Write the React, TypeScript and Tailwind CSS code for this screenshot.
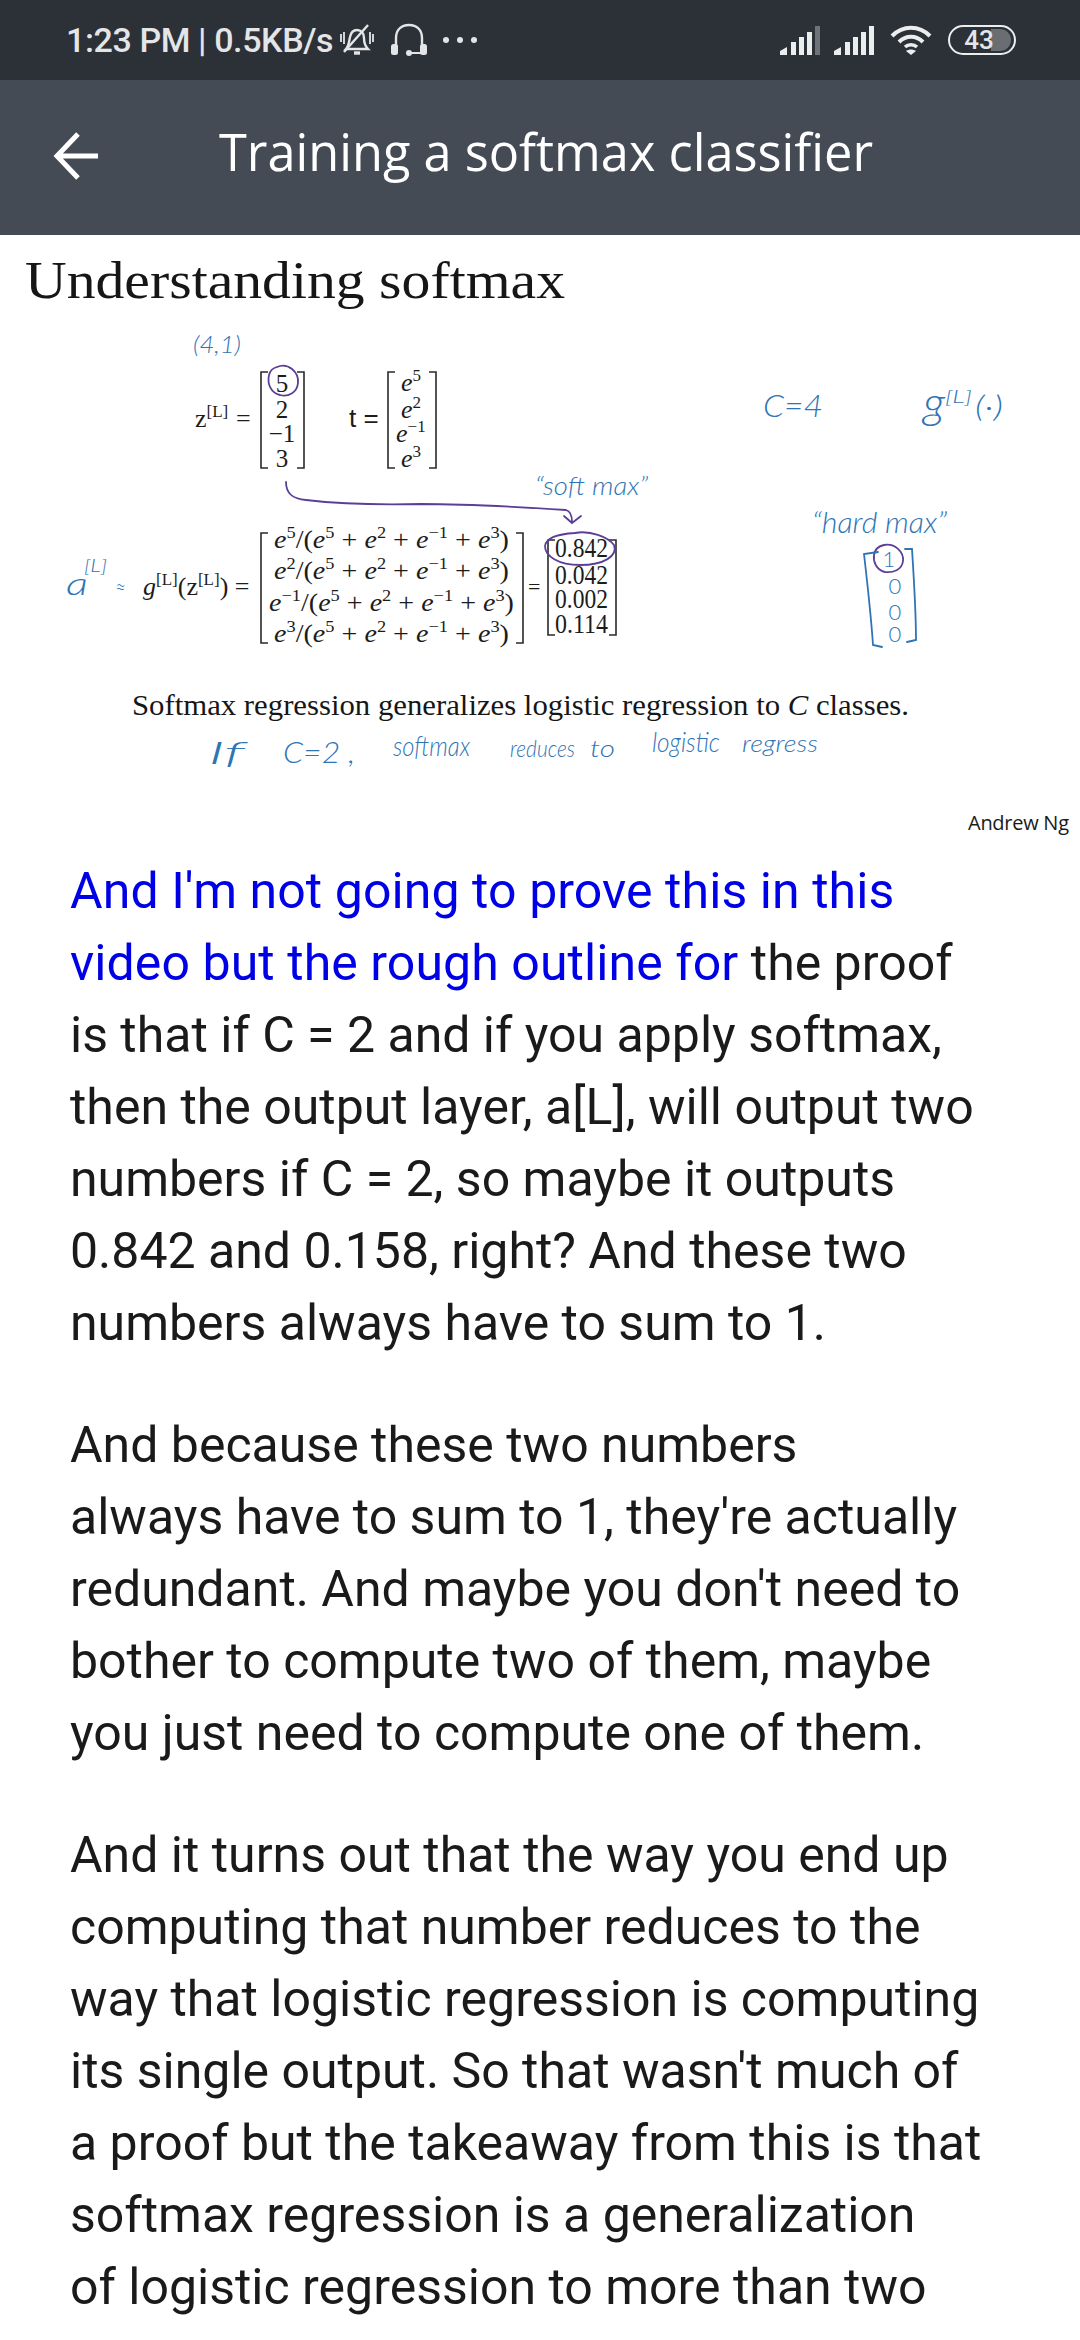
import { ReactNode } from 'react';

const SERIF = "font-['Liberation_Serif',serif]";

// e^x helper for the slide's formulas, `after` carries the baseline back down
function Pow({ base = 'e', exp, after }: { base?: string; exp: string; after: string }) {
  return (
    <>
      <tspan className="italic">{base}</tspan>
      <tspan dy={-10} fontSize={17}>
        {exp}
      </tspan>
      <tspan dy={10}>{after}</tspan>
    </>
  );
}

function FormulaRow({ exp, x, y, width }: { exp: string; x: number; y: number; width: number }) {
  return (
    <text x={x} y={y} fontSize={26} textLength={width} lengthAdjust="spacingAndGlyphs" className={`${SERIF} fill-[#1c1c1c]`}>
      <Pow exp={exp} after="/(" />
      <Pow exp="5" after=" + " />
      <Pow exp="2" after=" + " />
      <Pow exp="−1" after=" + " />
      <Pow exp="3" after=")" />
    </text>
  );
}

function Sup({ x, y, exp }: { x: number; y: number; exp: string }) {
  return (
    <text x={x} y={y}>
      <tspan className="italic">e</tspan>
      <tspan dy={-10} fontSize={17}>
        {exp}
      </tspan>
    </text>
  );
}

function Ink({ x, y, size, width, children }: { x: number; y: number; size: number; width: number; children: ReactNode }) {
  return (
    <text
      x={x}
      y={y}
      fontSize={size}
      textLength={width}
      lengthAdjust="spacingAndGlyphs"
      className="font-['Lato',sans-serif] font-light italic fill-[#2f74b5]"
    >
      {children}
    </text>
  );
}

function Slide() {
  return (
    <svg viewBox="0 235 1080 605" className="block w-full h-[605px]">
      <text x={25} y={298} fontSize={52} textLength={540} lengthAdjust="spacingAndGlyphs" className={`${SERIF} fill-[#161616]`}>
        Understanding softmax
      </text>

      <Ink x={193} y={353} size={24} width={48}>(4,1)</Ink>

      {/* z[L] */}
      <text x={195} y={427} fontSize={26} className={`${SERIF} fill-[#1c1c1c]`}>
        z
        <tspan dy={-10} fontSize={17}>[L]</tspan>
        <tspan x={236} dy={10}>=</tspan>
      </text>
      <g fontSize={25} textAnchor="middle" className={`${SERIF} fill-[#1c1c1c]`}>
        <text x={282} y={392}>5</text>
        <text x={282} y={418}>2</text>
        <text x={282} y={442}>−1</text>
        <text x={282} y={467}>3</text>
      </g>
      <text x={349} y={427} fontSize={26} className="font-['Liberation_Sans',sans-serif] fill-[#1c1c1c]">
        t =
      </text>
      <g fontSize={26} className={`${SERIF} fill-[#1c1c1c]`}>
        <Sup x={401} y={391} exp="5" />
        <Sup x={401} y={418} exp="2" />
        <Sup x={396} y={442} exp="−1" />
        <Sup x={401} y={467} exp="3" />
      </g>

      {/* a[L] = g(z) */}
      <Ink x={66} y={595} size={32} width={22}>a</Ink>
      <Ink x={84} y={572} size={18} width={23}>[L]</Ink>
      <Ink x={115} y={594} size={22} width={11}>≈</Ink>
      <text x={143} y={595} fontSize={26} className={`${SERIF} fill-[#1c1c1c]`}>
        <Pow base="g" exp="[L]" after="(z" />
        <tspan dy={-10} fontSize={17}>[L]</tspan>
        <tspan dy={10}>) =</tspan>
      </text>
      <FormulaRow exp="5" x={274} y={548} width={235} />
      <FormulaRow exp="2" x={274} y={579} width={235} />
      <FormulaRow exp="−1" x={269} y={611} width={245} />
      <FormulaRow exp="3" x={274} y={642} width={235} />
      <text x={528} y={594} fontSize={22} className={`${SERIF} fill-[#1c1c1c]`}>=</text>
      <g fontSize={27} className={`${SERIF} fill-[#1c1c1c]`}>
        <text x={555} y={557} textLength={53} lengthAdjust="spacingAndGlyphs">0.842</text>
        <text x={555} y={584} textLength={53} lengthAdjust="spacingAndGlyphs">0.042</text>
        <text x={555} y={608} textLength={53} lengthAdjust="spacingAndGlyphs">0.002</text>
        <text x={555} y={633} textLength={53} lengthAdjust="spacingAndGlyphs">0.114</text>
      </g>

      {/* printed brackets */}
      <g fill="none" stroke="#2a2a2a" strokeWidth={1.6}>
        <path d="M268 372H261V468H268M297 372H304V468H297" />
        <path d="M395 372H388V468H395M429 372H436V468H429" />
        <path d="M268 533H261V643H268M516 533H523V643H516" />
        <path d="M555 540H548V635H555M609 540H616V635H609" />
      </g>

      {/* purple pen */}
      <g fill="none" stroke="#5b3f97" strokeWidth={1.8} strokeLinecap="round">
        <path d="M277 367C288 362 299 372 298 383C297 393 288 397 280 395C271 393 267 384 269 375C270 371 273 368 277 367" />
        <path d="M286 482C286 494 293 499 306 500C340 504 380 505 421 504C470 504 520 507 566 510C570 511 572 516 572 522M564 516L572 523L581 516" />
        <path d="M575 533C590 530 608 537 614 545C618 556 604 565 580 565C558 565 545 556 545 546C546 538 558 534 575 533" />
        <path d="M884 545C895 543 904 552 903 561C902 570 893 573 885 572C876 570 873 561 874 555C875 549 879 546 884 545" />
      </g>

      {/* blue pen */}
      <Ink x={535} y={495} size={25} width={113}>“soft max”</Ink>
      <Ink x={763} y={417} size={32} width={60}>C=4</Ink>
      <Ink x={923} y={418} size={44} width={22}>g</Ink>
      <Ink x={945} y={403} size={17} width={27}>[L]</Ink>
      <Ink x={975} y={417} size={30} width={28}>(·)</Ink>
      <Ink x={812} y={533} size={30} width={135}>“hard max”</Ink>
      <g fontSize={22} textAnchor="middle" className="font-['Lato',sans-serif] font-light fill-[#2f74b5]">
        <text x={889} y={567}>1</text>
        <text x={895} y={594}>0</text>
        <text x={895} y={620}>0</text>
        <text x={895} y={642}>0</text>
      </g>
      <g fill="none" stroke="#2f74b5" strokeWidth={1.8} strokeLinecap="round">
        <path d="M878 552L864 554C867 580 871 615 873 645L882 647" />
        <path d="M905 549L912 549C914 580 916 615 916 640L907 642" />
      </g>

      <text x={132} y={715} fontSize={29} textLength={777} lengthAdjust="spacingAndGlyphs" className={`${SERIF} fill-[#161616]`}>
        Softmax regression generalizes logistic regression to <tspan className="italic">C</tspan> classes.
      </text>

      <Ink x={208} y={764} size={32} width={37}>If</Ink>
      <Ink x={283} y={763} size={30} width={72}>C=2 ,</Ink>
      <Ink x={393} y={756} size={28} width={77}>softmax</Ink>
      <Ink x={510} y={757} size={24} width={65}>reduces</Ink>
      <Ink x={590} y={757} size={24} width={25}>to</Ink>
      <Ink x={652} y={752} size={28} width={68}>logistic</Ink>
      <Ink x={742} y={752} size={24} width={76}>regress</Ink>

      <text x={968} y={830} fontSize={20} textLength={101} className="font-['Open_Sans',sans-serif] fill-[#1a1a1a]">
        Andrew Ng
      </text>
    </svg>
  );
}

function Signal({ dim }: { dim?: boolean }) {
  return (
    <svg viewBox="0 0 40 29" className="w-[40px] h-[29px]" fill="#eceded">
      <path d="M0 29V25L7 21V29Z" />
      <rect x="11" y="16" width="5" height="13" />
      <rect x="19" y="11" width="5" height="18" />
      <rect x="27" y="6" width="5" height="23" />
      <rect x="35" y="0" width="5" height="29" fill={dim ? '#6f7276' : '#eceded'} />
    </svg>
  );
}

function StatusBar() {
  return (
    <div className="h-[80px] bg-[#2c3037] flex items-center justify-between pl-[66px] pr-[64px] text-[#e4e5e7] font-['Roboto',sans-serif] font-medium">
      <div className="flex items-center">
        <span className="text-[34px] leading-none tracking-[-0.4px] whitespace-nowrap">1:23 PM | 0.5KB/s</span>
        <svg viewBox="0 0 36 34" className="w-[36px] h-[34px] ml-[6px]" fill="none" stroke="#e4e5e7" strokeWidth={2.4}>
          <path d="M7 26C10 23 10 18 11 14C12 9 15 7 18 7C22 7 25 10 25 15C25 20 26 23 29 26Z" />
          <path d="M5 29L29 2" />
          <path d="M15 30H21" strokeWidth={3.4} />
          <path d="M2 11V19M5 9V21M31 9V21M34 11V19" strokeWidth={1.8} />
        </svg>
        <svg viewBox="0 0 36 34" className="w-[36px] h-[34px] ml-[16px]" fill="none" stroke="#e4e5e7" strokeWidth={2.4}>
          <path d="M5 24V15C5 7 10 2 18 2C26 2 31 7 31 15V24" />
          <rect x="0" y="21" width="7" height="11" rx="2.5" fill="#e4e5e7" stroke="none" />
          <rect x="29" y="21" width="7" height="11" rx="2.5" fill="#e4e5e7" stroke="none" />
          <circle cx="18" cy="30" r="3" fill="#e4e5e7" stroke="none" />
          <path d="M30 30H20" strokeWidth={2} />
        </svg>
        <div className="flex gap-[8px] ml-[16px]">
          <span className="size-[6px] rounded-full bg-[#e4e5e7]" />
          <span className="size-[6px] rounded-full bg-[#e4e5e7]" />
          <span className="size-[6px] rounded-full bg-[#e4e5e7]" />
        </div>
      </div>
      <div className="flex items-center">
        <Signal dim />
        <div className="ml-[14px]">
          <Signal />
        </div>
        <svg viewBox="0 0 42 30" className="w-[42px] h-[30px] ml-[16px]" fill="none" stroke="#eceded" strokeWidth={4}>
          <path d="M2 11C13 0 29 0 40 11" />
          <path d="M9 17C16 10 26 10 33 17" />
          <path d="M15 22C18 19 24 19 27 22" strokeWidth={3.4} />
          <path d="M21 30L16 26C19 24 23 24 26 26Z" fill="#eceded" stroke="none" />
        </svg>
        <div className="relative ml-[16px] w-[68px] h-[30px] rounded-full border-[2.5px] border-[#eceded] overflow-hidden flex items-center justify-center">
          <div className="absolute inset-y-[2px] left-[41px] right-[3px] rounded-r-full bg-[#6a6d72]" />
          <span className="relative text-[26px] leading-none -ml-[6px]">43</span>
        </div>
      </div>
    </div>
  );
}

function Header() {
  return (
    <div className="h-[155px] bg-[#454b55] flex items-center text-white">
      <svg viewBox="0 0 50 50" className="w-[50px] h-[50px] ml-[52px] -mt-[4px]" fill="none" stroke="white" strokeWidth={5}>
        <path d="M46 25H6M26 3L5 25L26 47" />
      </svg>
      <h1 className="ml-[117px] -mt-[10px] text-[50.5px] leading-none font-['Open_Sans',sans-serif] whitespace-nowrap">
        Training a softmax classifier
      </h1>
    </div>
  );
}

const paragraphs = [
  [
    'the proof',
    'is that if C = 2 and if you apply softmax,',
    'then the output layer, a[L], will output two',
    'numbers if C = 2, so maybe it outputs',
    '0.842 and 0.158, right? And these two',
    'numbers always have to sum to 1.',
  ],
  [
    'And because these two numbers',
    "always have to sum to 1, they're actually",
    "redundant. And maybe you don't need to",
    'bother to compute two of them, maybe',
    'you just need to compute one of them.',
  ],
  [
    'And it turns out that the way you end up',
    'computing that number reduces to the',
    'way that logistic regression is computing',
    "its single output. So that wasn't much of",
    'a proof but the takeaway from this is that',
    'softmax regression is a generalization',
    'of logistic regression to more than two',
  ],
];

export default function App() {
  return (
    <div className="w-[1080px] h-[2340px] overflow-hidden bg-white">
      <StatusBar />
      <Header />
      <Slide />
      <div className="pl-[70px] text-[50px] leading-[72px] text-[#1a1a1a] font-['Roboto',sans-serif] whitespace-nowrap">
        <p className="mt-[15px]">
          <span className="text-[#0000e6] tracking-[0.08px]">
            And I'm not going to prove this in this
            <br />
            video but the rough outline for
          </span>{' '}
          {paragraphs[0].map((line, i) => (
            <span key={line}>
              {i > 0 && <br />}
              {line}
            </span>
          ))}
        </p>
        {paragraphs.slice(1).map((lines) => (
          <p key={lines[0]} className="mt-[50px]">
            {lines.map((line, i) => (
              <span key={line}>
                {i > 0 && <br />}
                {line}
              </span>
            ))}
          </p>
        ))}
      </div>
    </div>
  );
}
